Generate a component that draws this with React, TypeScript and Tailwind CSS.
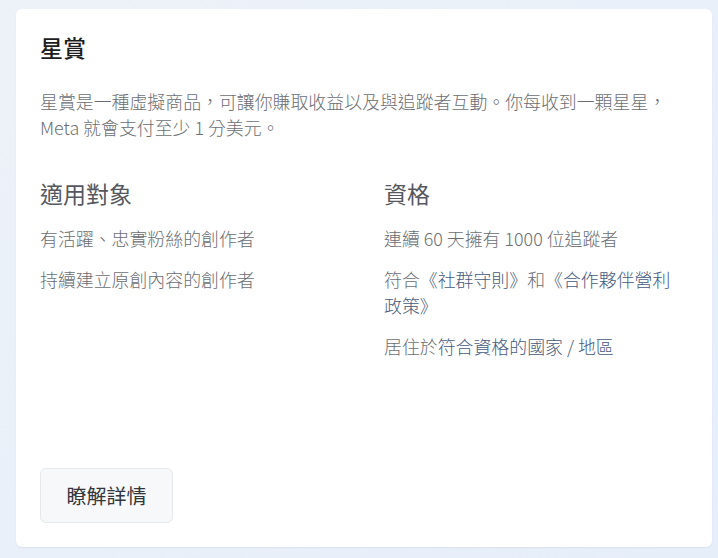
export default function App() {
  return (
    <div
      className="flex h-[558px] w-[718px] bg-gradient-to-br from-[#edf2f8] to-[#e6eefa] pb-[11px] pl-[16px] pr-[6px] pt-[9px]"
      style={{ fontFamily: '"Noto Sans CJK TC", "Noto Sans", sans-serif' }}
    >
      <div className="flex w-full flex-col rounded-md bg-white px-[24px] pb-[24px] pt-[22px] shadow-[0_1px_2px_rgba(0,0,0,0.06)]">
        <h1 className="text-[23px] font-medium leading-[32px] text-[#1c1e21]">
          星賞
        </h1>
        <p className="mt-[25px] text-[17.9px] font-light leading-[26px] text-[#6b6e73]">
          星賞是一種虛擬商品，可讓你賺取收益以及與追蹤者互動。你每收到一顆星星，
          <br />
          Meta 就會支付至少 1 分美元。
        </p>

        <div className="mt-[37px] grid grid-cols-2 gap-x-[40px]">
          <div className="flex flex-col">
            <h2 className="text-[23px] leading-[32px] text-[#55585e]">
              適用對象
            </h2>
            <ul className="mt-[16px] flex flex-col gap-[15px] text-[17.9px] font-light leading-[26px] text-[#6b6e73]">
              <li>有活躍、忠實粉絲的創作者</li>
              <li>持續建立原創內容的創作者</li>
            </ul>
          </div>
          <div className="flex flex-col">
            <h2 className="text-[23px] leading-[32px] text-[#55585e]">
              資格
            </h2>
            <ul className="mt-[16px] flex flex-col gap-[15px] text-[17.9px] font-light leading-[26px] text-[#6b6e73]">
              <li>連續 60 天擁有 1000 位追蹤者</li>
              <li className="pr-[6px]">
                符合<span className="text-[#475a7d]">《社群守則》</span>和
                <span className="text-[#475a7d]">《合作夥伴營利政策》</span>
              </li>
              <li>
                居住於<span className="text-[#475a7d]">符合資格的國家 / 地區</span>
              </li>
            </ul>
          </div>
        </div>

        <button className="mt-auto h-[55px] w-[133px] rounded-md border border-[#e6e8ec] bg-[#f6f8fa] text-[20px] text-[#33363b]">
          瞭解詳情
        </button>
      </div>
    </div>
  );
}
